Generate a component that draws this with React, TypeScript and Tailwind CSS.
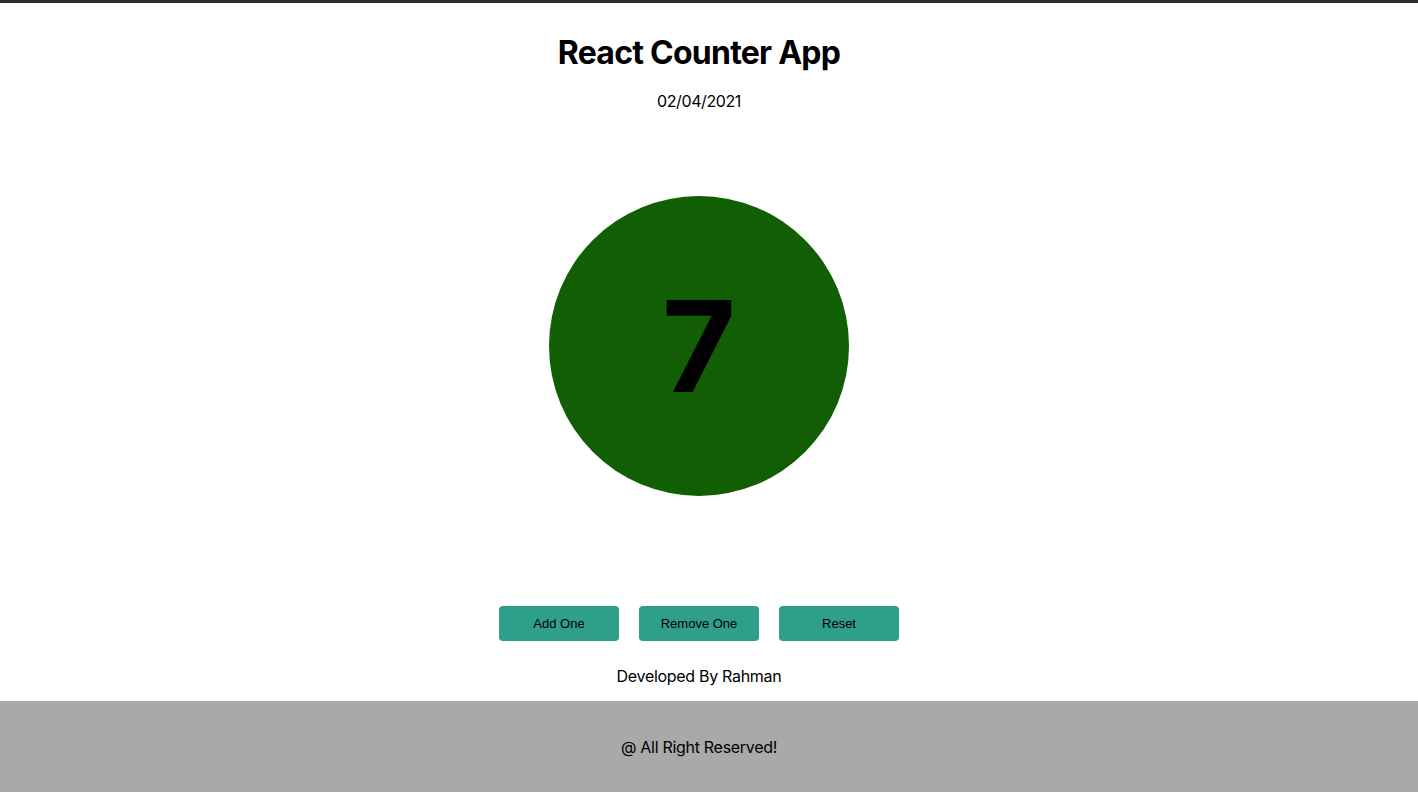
import { useState } from "react";

const today = "02/04/2021";

export default function App() {
  const [count, setCount] = useState(7);

  return (
    <div className="min-h-screen flex flex-col bg-white text-black font-['Inter',sans-serif]">
      <div className="h-[3px] bg-[#2c2c2e]" />
      <main className="flex flex-col items-center pr-5">
        <h1 className="mt-[30px] text-[32px] leading-[40px] font-bold tracking-[-0.75px]">
          React Counter App
        </h1>
        <p className="mt-4 text-base leading-6 tracking-[-0.4px]">{today}</p>
        <div className="mt-[83px] w-[300px] h-[300px] rounded-full bg-[#115e04] flex items-center justify-center">
          <span className="text-[127px] leading-none font-bold">{count}</span>
        </div>
        <div className="mt-[110px] flex gap-5 font-['Liberation_Sans',Arial,sans-serif] text-[13px]">
          <button
            className="w-[120px] h-[35px] rounded bg-[#2f9e8b]"
            onClick={() => setCount(count + 1)}
          >
            Add One
          </button>
          <button
            className="w-[120px] h-[35px] rounded bg-[#2f9e8b]"
            onClick={() => setCount(count - 1)}
          >
            Remove One
          </button>
          <button
            className="w-[120px] h-[35px] rounded bg-[#2f9e8b]"
            onClick={() => setCount(0)}
          >
            Reset
          </button>
        </div>
        <p className="mt-[23px] text-base leading-6 tracking-[-0.3px]">Developed By Rahman</p>
      </main>
      <footer className="mt-[13px] h-[91px] bg-[#a9a9a9] flex items-center justify-center pr-5 text-base tracking-[-0.3px]">
        @ All Right Reserved!
      </footer>
    </div>
  );
}
